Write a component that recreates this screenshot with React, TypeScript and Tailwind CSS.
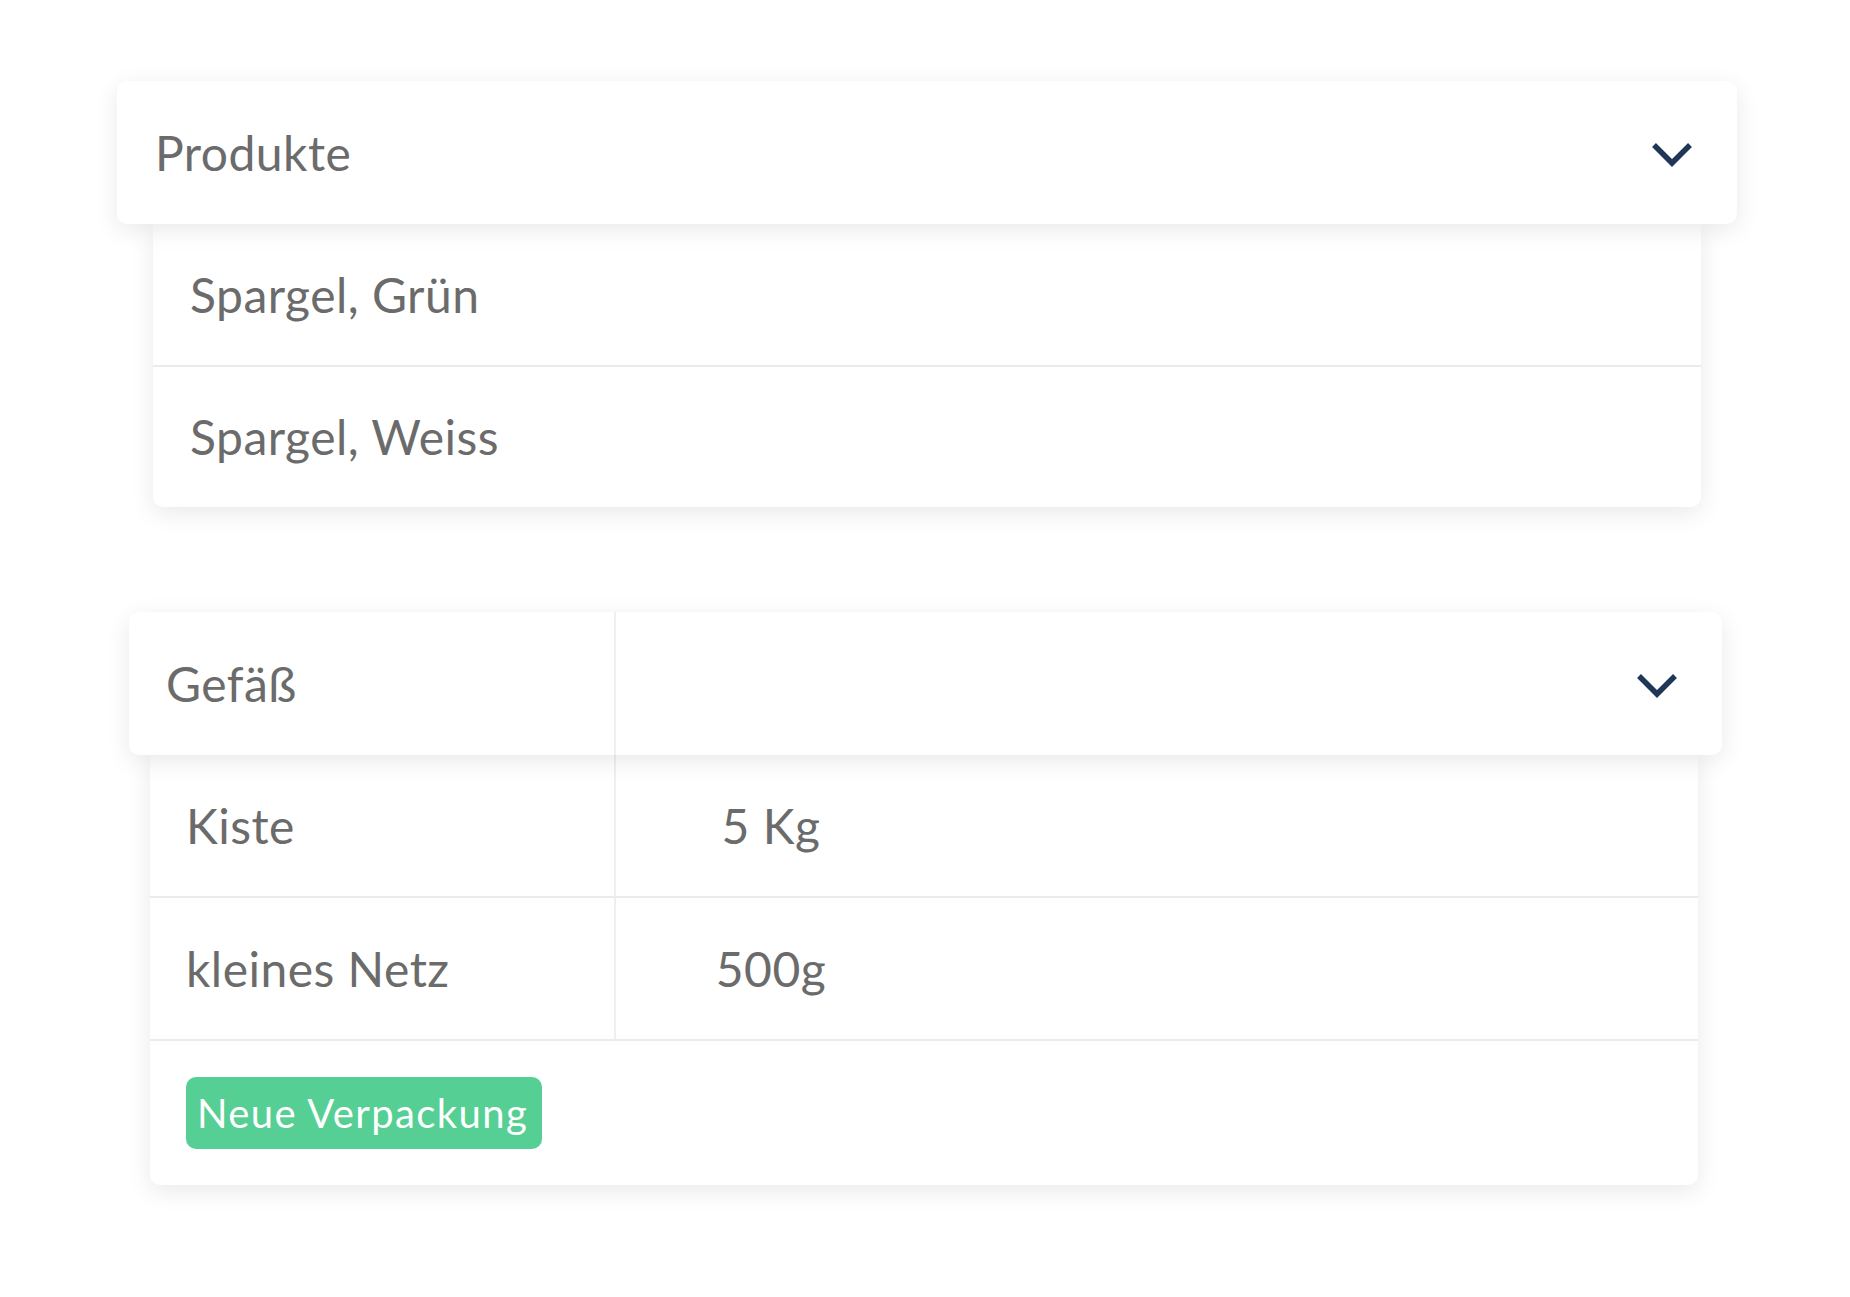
import React from 'react'

const font = { fontFamily: 'Lato, "Noto Sans", sans-serif' }

function Chevron() {
  return (
    <svg width="40" height="26" viewBox="0 0 40 26" fill="none" className="shrink-0 mt-[4px]">
      <path d="M2 3 L20 21 L38 3" stroke="#1e3657" strokeWidth="5.5" strokeLinecap="butt" strokeLinejoin="miter" />
    </svg>
  )
}

export default function App() {
  const products = ['Spargel, Grün', 'Spargel, Weiss']
  const containers = [
    { name: 'Kiste', size: '5 Kg' },
    { name: 'kleines Netz', size: '500g' },
  ]

  return (
    <div className="min-h-screen bg-white pt-[81px] pl-[117px] text-[#6b6b6b] tracking-[0.03em]" style={font}>
      {/* Produkte */}
      <section className="w-[1620px]">
        <div className="relative z-10 h-[143px] rounded-[10px] bg-white shadow-[0_6px_24px_rgba(0,0,0,0.09)] flex items-center justify-between pl-[38px] pr-[45px]">
          <span className="text-[48px] leading-none">Produkte</span>
          <Chevron />
        </div>
        <div className="mx-[36px] rounded-b-[10px] bg-white shadow-[0_6px_24px_rgba(0,0,0,0.09)]">
          {products.map((p, i) => (
            <div
              key={p}
              className={`flex items-center pl-[37px] text-[48px] leading-none ${i === 0 ? 'h-[143px] border-b-[2px] border-[#ebebeb]' : 'h-[140px]'}`}
            >
              {p}
            </div>
          ))}
        </div>
      </section>

      {/* Gefäß */}
      <section className="w-[1593px] ml-[12px] mt-[105px]">
        <div className="relative z-10 h-[143px] rounded-[10px] bg-white shadow-[0_6px_24px_rgba(0,0,0,0.09)] flex items-center">
          <div className="w-[487px] h-full flex items-center pl-[37px] border-r-[2px] border-[#efefef] text-[48px] leading-none">
            Gefäß
          </div>
          <div className="flex-1 flex justify-end pr-[45px]">
            <Chevron />
          </div>
        </div>
        <div className="ml-[21px] mr-[24px] rounded-b-[10px] bg-white shadow-[0_6px_24px_rgba(0,0,0,0.09)]">
          {containers.map((c) => (
            <div key={c.name} className="flex h-[143px] border-b-[2px] border-[#ebebeb] text-[48px] leading-none">
              <div className="w-[466px] flex items-center pl-[36px] border-r-[2px] border-[#efefef]">{c.name}</div>
              <div className="w-[310px] flex items-center justify-center">{c.size}</div>
            </div>
          ))}
          <div className="h-[144px] flex items-center pl-[36px]">
            <span className="h-[72px] flex items-center pl-[11px] pr-[14px] rounded-[10px] bg-[#55cf94] text-white text-[40px] leading-none tracking-[0.035em]">
              Neue Verpackung
            </span>
          </div>
        </div>
      </section>
    </div>
  )
}
